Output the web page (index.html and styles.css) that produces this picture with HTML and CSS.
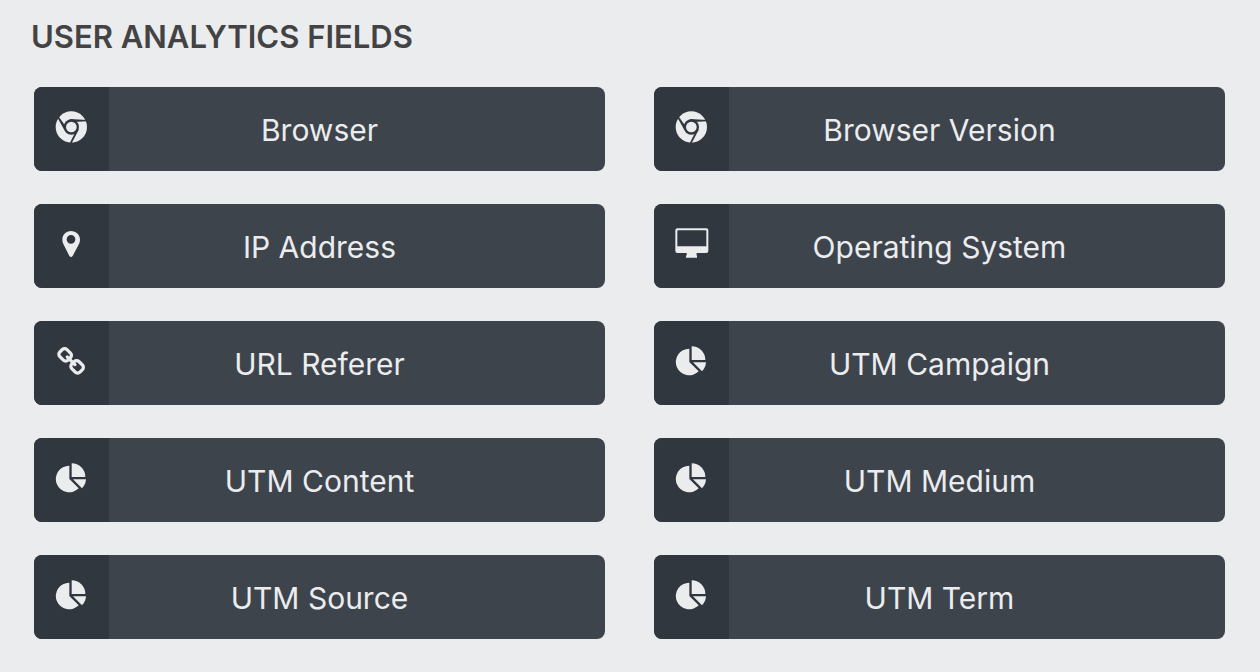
FILE: index.html
```
<!DOCTYPE html>
<html lang="en">
<head>
    <meta charset="UTF-8">
    <meta name="viewport" content="width=device-width, initial-scale=1.0">
    <title>User Analytics Fields</title>
    <link rel="stylesheet" href="styles.css">
</head>

<body>
    <!-- icons -->
    <svg class="icon-defs" aria-hidden="true">
      <symbol id="icon-chrome" viewBox="0 0 111 111">
        <circle cx="55" cy="57" r="47" fill="currentColor"/>
        <g class="cut">
          <path d="M49 33L105 36L105 40L61 42Z"/>
          <path d="M14 30L18 27L41 59L34 66Z"/>
          <path d="M69 68L78 64L56 106L50 106Z"/>
          <circle cx="55" cy="57" r="23"/>
        </g>
        <circle cx="55" cy="57" r="16" fill="currentColor"/>
      </symbol>
      <symbol id="icon-marker" viewBox="0 0 111 111">
        <path fill="currentColor" fill-rule="evenodd" d="M54 18C39 18 28 29 28 44C28 49 29 53 31 57L49 93Q54 99 59 93L78 57C80 53 81 49 81 44C81 29 69 18 54 18ZM54 30A13 13 0 1 1 54 56A13 13 0 1 1 54 30Z"/>
      </symbol>
      <symbol id="icon-desktop" viewBox="0 0 111 111">
        <path fill="currentColor" fill-rule="evenodd" d="M13 10H100Q106 10 106 16V78Q106 84 100 84H71Q70 90 72 93V98H39V93Q42 90 41 84H13Q7 84 7 78V16Q7 10 13 10ZM15 16Q13 16 13 18V64H100V18Q100 16 98 16Z"/>
      </symbol>
      <symbol id="icon-link" viewBox="0 0 111 111">
        <path fill="currentColor" transform="translate(12 14) scale(.051)" d="M1456 1216q0-40-28-68l-208-208q-28-28-68-28-42 0-72 32 3 3 19 18.500t21.500 21.500 15 19 13 25.500 3.500 27.500q0 40-28 68t-68 28q-15 0-27.500-3.500t-25.500-13-19-15-21.500-21.500-18.500-19q-33 31-33 73 0 40 28 68l206 207q27 27 68 27 40 0 68-26l147-146q28-28 28-67zm-703-705q0-40-28-68l-206-207q-28-28-68-28-39 0-68 27l-147 146q-28 28-28 67 0 40 28 68l208 208q27 27 68 27 42 0 72-31-3-3-19-18.500t-21.500-21.500-15-19-13-25.500-3.500-27.500q0-40 28-68t68-28q15 0 27.500 3.500t25.500 13 19 15 21.500 21.500 18.500 19q33-31 33-73zm895 705q0 120-85 203l-147 146q-83 83-203 83-121 0-204-85l-206-207q-83-83-83-203 0-123 88-209l-88-88q-86 88-208 88-120 0-204-84l-208-208q-84-84-84-204t85-203l147-146q83-83 203-83 121 0 204 85l206 207q83 83 83 203 0 123-88 209l88 88q86-88 208-88 120 0 204 84l208 208q84 84 84 204z"/>
      </symbol>
      <symbol id="icon-pie" viewBox="0 0 111 111">
        <path fill="currentColor" d="M49 60V20A40 40 0 1 0 77 88Z"/>
        <path fill="currentColor" d="M56 54V13A41 41 0 0 1 97 54Z"/>
        <path fill="currentColor" d="M60 61H99Q98 77 87 88Z"/>
      </symbol>
    </svg>

    <section class="fields">
      <h2>USER ANALYTICS FIELDS</h2>
      <div class="field-list">
        <button class="field" type="button">
          <span class="field-icon"><svg><use href="#icon-chrome"/></svg></span>
          <span class="field-name">Browser</span>
        </button>
        <button class="field" type="button">
          <span class="field-icon"><svg><use href="#icon-chrome"/></svg></span>
          <span class="field-name">Browser Version</span>
        </button>
        <button class="field" type="button">
          <span class="field-icon"><svg><use href="#icon-marker"/></svg></span>
          <span class="field-name">IP Address</span>
        </button>
        <button class="field" type="button">
          <span class="field-icon"><svg><use href="#icon-desktop"/></svg></span>
          <span class="field-name">Operating System</span>
        </button>
        <button class="field" type="button">
          <span class="field-icon"><svg><use href="#icon-link"/></svg></span>
          <span class="field-name">URL Referer</span>
        </button>
        <button class="field" type="button">
          <span class="field-icon"><svg><use href="#icon-pie"/></svg></span>
          <span class="field-name">UTM Campaign</span>
        </button>
        <button class="field" type="button">
          <span class="field-icon"><svg><use href="#icon-pie"/></svg></span>
          <span class="field-name">UTM Content</span>
        </button>
        <button class="field" type="button">
          <span class="field-icon"><svg><use href="#icon-pie"/></svg></span>
          <span class="field-name">UTM Medium</span>
        </button>
        <button class="field" type="button">
          <span class="field-icon"><svg><use href="#icon-pie"/></svg></span>
          <span class="field-name">UTM Source</span>
        </button>
        <button class="field" type="button">
          <span class="field-icon"><svg><use href="#icon-pie"/></svg></span>
          <span class="field-name">UTM Term</span>
        </button>
      </div>
    </section>
</body>
</html>
```
FILE: styles.css
```
*{
  box-sizing: border-box;
}
body{
  margin: 0;
  background-color: #ebecee;
  font-family: Inter, "Liberation Sans", sans-serif;
}
.icon-defs{
  display: none;
}
.fields{
  padding: 17px 35px 33px 34px;
}
h2{
  margin: 0 0 30px -3px;
  font-size: 31px;
  line-height: 40px;
  font-weight: 600;
  color: #434343;
}
.field-list{
  display: grid;
  grid-template-columns: 1fr 1fr;
  gap: 33px 49px;
}
/* the icon column is mirrored on the right so the name stays centered */
.field{
  display: grid;
  grid-template-columns: 75px 1fr 75px;
  min-height: 84px;
  padding: 0;
  border: 0;
  border-radius: 8px;
  overflow: hidden;
  background-color: #3e444c;
  color: #ebecee;
  font-family: inherit;
  font-size: 30px;
  line-height: 40px;
  cursor: pointer;
}
.field:hover{
  background-color: #474e57;
}
.field-icon{
  display: flex;
  align-items: center;
  justify-content: center;
  padding-bottom: 5px;
  background-color: #31373f;
}
.field-icon svg{
  width: 37px;
  height: 37px;
}
.field-name{
  align-self: center;
  padding-top: 2px;
}
.cut{
  fill: #31373f;
}
```
